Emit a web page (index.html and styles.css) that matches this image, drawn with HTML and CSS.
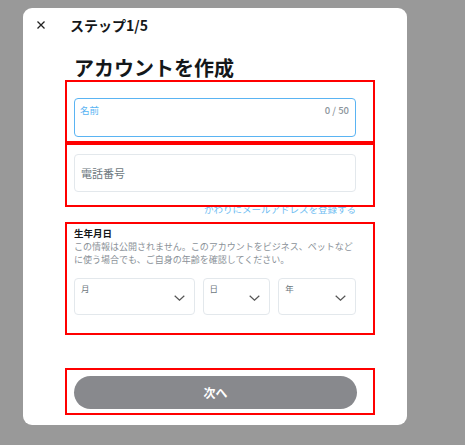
FILE: index.html
```html
<!DOCTYPE html>
<html lang="ja">
<head>
    <meta charset="UTF-8">
    <meta name="viewport" content="width=device-width, initial-scale=1.0">
    <title>アカウントを作成</title>
    <link rel="stylesheet" href="styles.css">
</head>
<body>
    <div class="modal">
        <div class="modal-header">
            <svg class="close-icon" width="8" height="8" viewBox="0 0 8 8">
                <path d="M0.5 0.5 L7.5 7.5 M7.5 0.5 L0.5 7.5" stroke="#222" stroke-width="1.3" fill="none"/>
            </svg>
            <span class="step">ステップ1/5</span>
        </div>

        <div class="modal-body">
            <h1 class="title">アカウントを作成</h1>

            <div class="field field-active">
                <div class="field-top">
                    <span class="field-label">名前</span>
                    <span class="field-count">0 / 50</span>
                </div>
            </div>

            <div class="field field-plain">
                <span class="placeholder">電話番号</span>
            </div>

            <div class="alt-link">かわりにメールアドレスを登録する</div>

            <div class="dob-title">生年月日</div>
            <p class="dob-note">この情報は公開されません。このアカウントをビジネス、ペットなどに使う場合でも、ご自身の年齢を確認してください。</p>

            <div class="dob-row">
                <div class="select select-month">
                    <span class="select-label">月</span>
                    <svg class="chevron" width="11" height="6" viewBox="0 0 11 6"><path d="M0.7 0.7 L5.5 5.2 L10.3 0.7" stroke="#555" stroke-width="1.2" fill="none"/></svg>
                </div>
                <div class="select select-day">
                    <span class="select-label">日</span>
                    <svg class="chevron" width="11" height="6" viewBox="0 0 11 6"><path d="M0.7 0.7 L5.5 5.2 L10.3 0.7" stroke="#555" stroke-width="1.2" fill="none"/></svg>
                </div>
                <div class="select select-year">
                    <span class="select-label">年</span>
                    <svg class="chevron" width="11" height="6" viewBox="0 0 11 6"><path d="M0.7 0.7 L5.5 5.2 L10.3 0.7" stroke="#555" stroke-width="1.2" fill="none"/></svg>
                </div>
            </div>

            <button class="next-btn" disabled>次へ</button>
        </div>

        <!-- annotation boxes -->
        <div class="mark mark-name"></div>
        <div class="mark mark-phone"></div>
        <div class="mark mark-dob"></div>
        <div class="mark mark-next"></div>
    </div>
</body>
</html>
```

FILE: styles.css
```css
body {
    margin: 0;
    padding: 8px 0 0 23px;
    background-color: #999999;
    font-family: "Noto Sans CJK JP", "Noto Sans", sans-serif;
    color: #14171a;
}

.modal {
    position: relative;
    width: 384px;
    height: 417px;
    background-color: #fff;
    border-radius: 9px;
    box-sizing: border-box;
}

.modal-header {
    display: flex;
    align-items: center;
    height: 34px;
    padding-left: 14px;
}

.close-icon {
    margin-right: 25px;
}

.step {
    font-size: 14px;
    font-weight: bold;
}

.modal-body {
    padding: 0 51px;
}

.title {
    margin: 14px 0 0;
    font-size: 20px;
    line-height: 24px;
    font-weight: bold;
}

.field {
    box-sizing: border-box;
    border-radius: 4px;
}

.field-active {
    height: 39px;
    margin-top: 18px;
    border: 1.5px solid #5ab4f3;
    padding: 5px 6px 0 5px;
}

.field-top {
    display: flex;
    justify-content: space-between;
    line-height: 12px;
}

.field-label {
    font-size: 9.5px;
    color: #5ab4f3;
}

.field-count {
    font-size: 9.5px;
    font-weight: 500;
    color: #8c959c;
}

.field-plain {
    display: flex;
    align-items: center;
    height: 38px;
    margin-top: 17px;
    border: 1px solid #e3e8ec;
    padding-left: 6px;
}

.placeholder {
    font-size: 11px;
    color: #6d7880;
}

.alt-link {
    margin-top: 10px;
    text-align: right;
    font-size: 9.5px;
    line-height: 14px;
    color: #6fbdf2;
}

.dob-title {
    margin-top: 10px;
    font-size: 9.5px;
    line-height: 14px;
    font-weight: bold;
}

.dob-note {
    margin: 0;
    font-size: 9px;
    line-height: 13px;
    color: #8a9198;
}

.dob-row {
    display: flex;
    gap: 8px;
    margin-top: 12px;
}

.select {
    display: flex;
    justify-content: space-between;
    align-items: flex-start;
    box-sizing: border-box;
    height: 37px;
    border: 1px solid #e3e8ec;
    border-radius: 4px;
    padding: 2px 9px 0 6px;
}

.select-month { width: 121px; }
.select-day { width: 68px; }
.select-year { width: 78px; }

.select-label {
    font-size: 8.5px;
    line-height: 14px;
    color: #6d7880;
}

.chevron {
    margin-top: 14px;
}

.next-btn {
    display: block;
    width: 283px;
    height: 33px;
    margin-top: 61px;
    border: none;
    border-radius: 17px;
    background-color: #88898d;
    color: #fff;
    font-family: inherit;
    font-size: 12px;
    font-weight: bold;
    cursor: not-allowed;
}

.mark {
    position: absolute;
    left: 42px;
    width: 310px;
    box-sizing: border-box;
    border: 2px solid #ff0000;
    pointer-events: none;
}

.mark-name { top: 72px; height: 63px; }
.mark-phone { top: 135px; height: 64px; }
.mark-dob { top: 214px; height: 113px; }
.mark-next { top: 360px; height: 47px; }
```
